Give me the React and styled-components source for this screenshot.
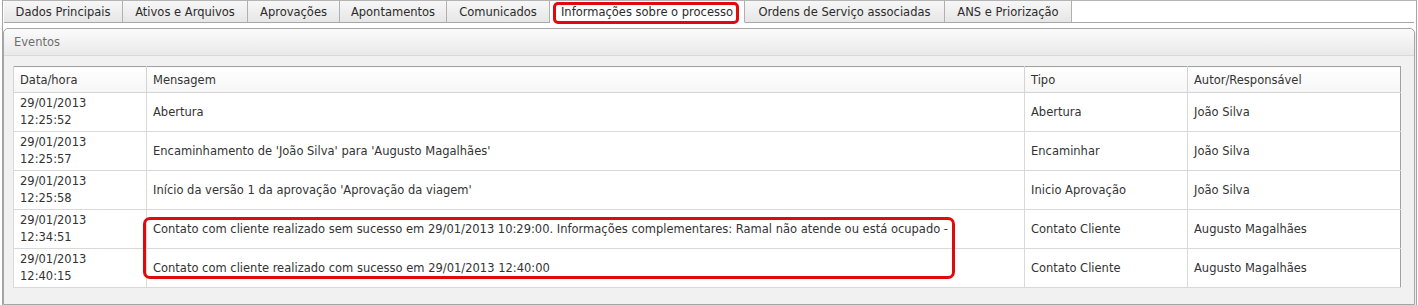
import React from 'react';
import styled, { createGlobalStyle } from 'styled-components';

const tabs = [
  { label: 'Dados Principais', w: 119 },
  { label: 'Ativos e Arquivos', w: 125 },
  { label: 'Aprovações', w: 92 },
  { label: 'Apontamentos', w: 107 },
  { label: 'Comunicados', w: 103 },
  { label: 'Informações sobre o processo', w: 195, active: true },
  { label: 'Ordens de Serviço associadas', w: 200 },
  { label: 'ANS e Priorização', w: 127 },
];

const columns = [
  { label: 'Data/hora', w: 133 },
  { label: 'Mensagem', w: 878 },
  { label: 'Tipo', w: 163 },
  { label: 'Autor/Responsável', w: 213 },
];

const events = [
  ['29/01/2013', '12:25:52', 'Abertura', 'Abertura', 'João Silva'],
  ['29/01/2013', '12:25:57', "Encaminhamento de 'João Silva' para 'Augusto Magalhães'", 'Encaminhar', 'João Silva'],
  ['29/01/2013', '12:25:58', "Início da versão 1 da aprovação 'Aprovação da viagem'", 'Inicio Aprovação', 'João Silva'],
  ['29/01/2013', '12:34:51', 'Contato com cliente realizado sem sucesso em 29/01/2013 10:29:00. Informações complementares: Ramal não atende ou está ocupado -', 'Contato Cliente', 'Augusto Magalhães'],
  ['29/01/2013', '12:40:15', 'Contato com cliente realizado com sucesso em 29/01/2013 12:40:00', 'Contato Cliente', 'Augusto Magalhães'],
];

const App = () => {
  return (
    <>
      <GlobalStyle />
      <Frame>
        <TabStrip>
          {tabs.map((t) => (
            <Tab key={t.label} $w={t.w} $active={t.active}>
              {t.label}
              {t.active && <TabMark />}
            </Tab>
          ))}
          <TabFill />
        </TabStrip>
        <Panel>
          <PanelHeader>Eventos</PanelHeader>
          <PanelBody>
            <TableWrap>
              <Table>
                <colgroup>
                  {columns.map((c) => (
                    <col key={c.label} style={{ width: c.w }} />
                  ))}
                </colgroup>
                <thead>
                  <tr>
                    {columns.map((c) => (
                      <Th key={c.label}>{c.label}</Th>
                    ))}
                  </tr>
                </thead>
                <tbody>
                  {events.map((e, i) => (
                    <tr key={i}>
                      <Td>
                        {e[0]}
                        <br />
                        {e[1]}
                      </Td>
                      <Td>{e[2]}</Td>
                      <Td>{e[3]}</Td>
                      <Td>{e[4]}</Td>
                    </tr>
                  ))}
                </tbody>
              </Table>
              <RowMark />
            </TableWrap>
          </PanelBody>
        </Panel>
      </Frame>
    </>
  );
};

export default App;

const GlobalStyle = createGlobalStyle`
  body {
    margin: 0;
    background: #ffffff;
    font-family: Verdana, "DejaVu Sans", sans-serif;
    font-size: 11.5px;
    color: #333333;
  }
`;

const Frame = styled.div`
  margin-left: 2px;
  width: 1415px;
  height: 305px;
  border-left: 1px solid #a4a4a4;
  border-right: 1px solid #a4a4a4;
  box-sizing: border-box;
  display: flex;
  flex-direction: column;
`;

const TabStrip = styled.div`
  display: flex;
  height: 23px;
  border-top: 1px solid #b4b4b4;
  box-sizing: border-box;
  padding-left: 1px;
`;

const Tab = styled.div`
  position: relative;
  width: ${(p) => p.$w}px;
  box-sizing: border-box;
  display: flex;
  align-items: center;
  justify-content: center;
  border-right: 1px solid #b0b0b0;
  border-bottom: 1px solid ${(p) => (p.$active ? '#ffffff' : '#a8a8a8')};
  background: ${(p) => (p.$active ? '#ffffff' : 'linear-gradient(#f7f7f7, #e6e6e6)')};
  color: #2b2b2b;
  white-space: nowrap;
`;

const TabMark = styled.span`
  position: absolute;
  left: 3px;
  right: 5px;
  top: 1px;
  bottom: -2px;
  border: 3px solid #e10a0a;
  border-radius: 5px;
`;

const TabFill = styled.div`
  flex: 1;
  border-bottom: 1px solid #a8a8a8;
  margin-right: 2px;
`;

const Panel = styled.div`
  margin: 5px 1px 0 0;
  flex: 1;
  border: 1px solid #a6a6a6;
  border-radius: 5px 5px 0 0;
  display: flex;
  flex-direction: column;
  background: #f1f1f1;
  box-shadow: 1px 1px 1px rgba(0, 0, 0, 0.08);
`;

const PanelHeader = styled.div`
  height: 26px;
  display: flex;
  align-items: center;
  padding-left: 10px;
  color: #6e6e6e;
  background: linear-gradient(#fbfbfb, #e9e9e9);
  border-bottom: 1px solid #d9d9d9;
  border-radius: 5px 5px 0 0;
`;

const PanelBody = styled.div`
  padding: 10px 13px 0 9px;
`;

const TableWrap = styled.div`
  position: relative;
`;

const Table = styled.table`
  border-collapse: collapse;
  table-layout: fixed;
  width: 1388px;
  background: #ffffff;
  border: 1px solid #a0a0a0;
`;

const Th = styled.th`
  height: 25px;
  padding: 0 6px;
  text-align: left;
  font-weight: normal;
  color: #333333;
  border-left: 1px solid #d4d4d4;
  border-bottom: 1px solid #d4d4d4;
  background: linear-gradient(#ffffff, #f6f6f6);
`;

const Td = styled.td`
  height: 38px;
  padding: 0 6px;
  line-height: 17px;
  vertical-align: middle;
  border-left: 1px solid #d9d9d9;
  border-bottom: 1px solid #d9d9d9;
  white-space: nowrap;
  overflow: hidden;
`;

const RowMark = styled.div`
  position: absolute;
  left: 130px;
  top: 151px;
  width: 812px;
  height: 62px;
  box-sizing: border-box;
  border: 3px solid #e10a0a;
  border-radius: 7px;
`;
